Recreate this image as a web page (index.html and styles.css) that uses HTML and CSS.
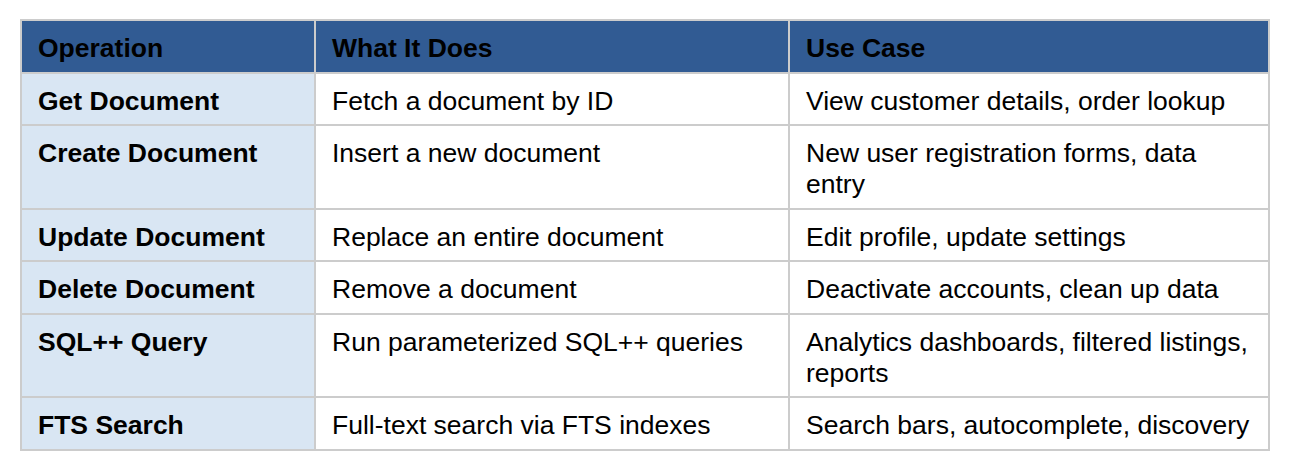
FILE: index.html
```html
<!DOCTYPE html>
<html>
<head>
<meta charset="utf-8">
<link rel="stylesheet" href="styles.css">
</head>
<body>
<div class="wrap">
<table class="ops">
  <thead>
    <tr>
      <th class="c1">Operation</th>
      <th class="c2">What It Does</th>
      <th class="c3">Use Case</th>
    </tr>
  </thead>
  <tbody>
    <tr><td class="op">Get Document</td><td>Fetch a document by ID</td><td>View customer details, order lookup</td></tr>
    <tr><td class="op">Create Document</td><td>Insert a new document</td><td>New user registration forms, data entry</td></tr>
    <tr><td class="op">Update Document</td><td>Replace an entire document</td><td>Edit profile, update settings</td></tr>
    <tr><td class="op">Delete Document</td><td>Remove a document</td><td>Deactivate accounts, clean up data</td></tr>
    <tr><td class="op">SQL++ Query</td><td>Run parameterized SQL++ queries</td><td>Analytics dashboards, filtered listings, reports</td></tr>
    <tr><td class="op">FTS Search</td><td>Full-text search via FTS indexes</td><td>Search bars, autocomplete, discovery</td></tr>
  </tbody>
</table>
</div>
</body>
</html>
```

FILE: styles.css
```css
html, body {
  margin: 0;
  padding: 0;
  background: #ffffff;
}
.wrap {
  padding: 19px 20px;
}
.ops {
  border-collapse: separate;
  border-spacing: 0;
  table-layout: fixed;
  width: 1250px;
  border-top: 2px solid #cccccc;
  border-left: 2px solid #cccccc;
  font-family: "Liberation Sans", Arial, sans-serif;
  font-size: 26.5px;
  line-height: 31px;
  color: #000000;
}
.ops th, .ops td {
  box-sizing: border-box;
  border-right: 2px solid #cccccc;
  border-bottom: 2px solid #cccccc;
  padding: 12px 14px 7.5px 16px;
  text-align: left;
  vertical-align: top;
}
.ops th {
  background: #315b93;
  font-weight: bold;
}
.c1 { width: 294px; }
.c2 { width: 474px; }
.c3 { width: 480px; }
.ops td.op {
  background: #d9e6f3;
  font-weight: bold;
}
```
